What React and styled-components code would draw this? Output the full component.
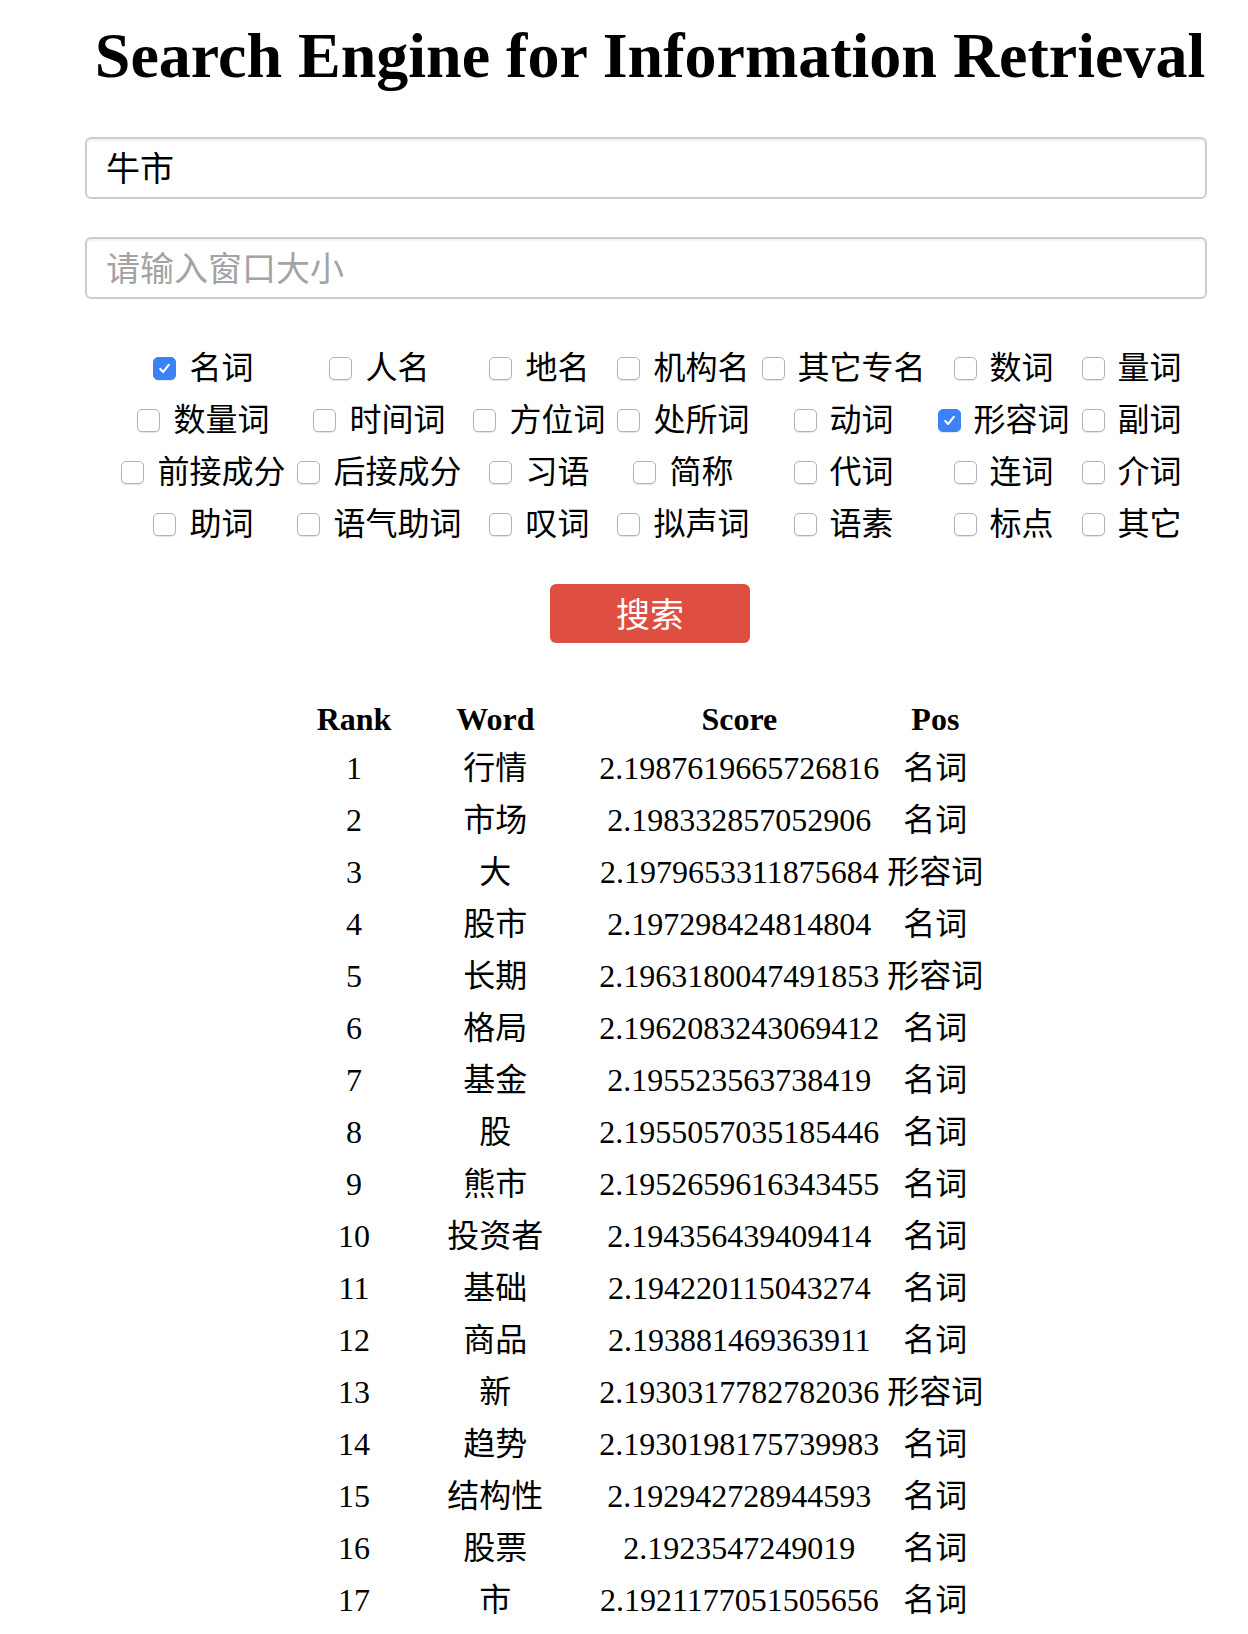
import { useState } from "react";
import styled, { createGlobalStyle } from "styled-components";

const GlobalStyle = createGlobalStyle`
  body {
    margin: 0;
    background: #fff;
    color: #000;
    font-family: "Liberation Serif", "Noto Sans CJK SC", serif;
  }
`;

const POS_ROWS = [
  ["名词", "人名", "地名", "机构名", "其它专名", "数词", "量词"],
  ["数量词", "时间词", "方位词", "处所词", "动词", "形容词", "副词"],
  ["前接成分", "后接成分", "习语", "简称", "代词", "连词", "介词"],
  ["助词", "语气助词", "叹词", "拟声词", "语素", "标点", "其它"],
];

const RESULTS = [
  [1, "行情", "2.1987619665726816", "名词"],
  [2, "市场", "2.198332857052906", "名词"],
  [3, "大", "2.1979653311875684", "形容词"],
  [4, "股市", "2.197298424814804", "名词"],
  [5, "长期", "2.1963180047491853", "形容词"],
  [6, "格局", "2.1962083243069412", "名词"],
  [7, "基金", "2.195523563738419", "名词"],
  [8, "股", "2.1955057035185446", "名词"],
  [9, "熊市", "2.1952659616343455", "名词"],
  [10, "投资者", "2.194356439409414", "名词"],
  [11, "基础", "2.194220115043274", "名词"],
  [12, "商品", "2.193881469363911", "名词"],
  [13, "新", "2.1930317782782036", "形容词"],
  [14, "趋势", "2.1930198175739983", "名词"],
  [15, "结构性", "2.192942728944593", "名词"],
  [16, "股票", "2.1923547249019", "名词"],
  [17, "市", "2.1921177051505656", "名词"],
];

const App = () => {
  const [query, setQuery] = useState("牛市");
  const [win, setWin] = useState("");
  const [picked, setPicked] = useState(["名词", "形容词"]);

  function toggle(name) {
    setPicked((old) =>
      old.includes(name) ? old.filter((p) => p !== name) : [...old, name]
    );
  }

  return (
    <>
      <GlobalStyle />
      <Page>
        <Title>Search Engine for Information Retrieval</Title>
        <Field value={query} onChange={(e) => setQuery(e.target.value)} />
        <Field
          $gap={38}
          placeholder="请输入窗口大小"
          value={win}
          onChange={(e) => setWin(e.target.value)}
        />
        <PosGrid>
          {POS_ROWS.flat().map((name) => {
            const on = picked.includes(name);
            return (
              <PosOption key={name} onClick={() => toggle(name)}>
                <Box $checked={on}>
                  {on && (
                    <svg width="15" height="15" viewBox="0 0 14 14">
                      <path
                        d="M3 7.4 L5.8 10.2 L11 3.6"
                        fill="none"
                        stroke="#fff"
                        strokeWidth="2"
                        strokeLinecap="round"
                        strokeLinejoin="round"
                      />
                    </svg>
                  )}
                </Box>
                {name}
              </PosOption>
            );
          })}
        </PosGrid>
        <SearchButton>搜索</SearchButton>
        <ResultTable>
          <thead>
            <tr>
              <th>Rank</th>
              <WordHead>Word</WordHead>
              <th>Score</th>
              <th>Pos</th>
            </tr>
          </thead>
          <tbody>
            {RESULTS.map(([rank, word, score, pos]) => (
              <tr key={rank}>
                <td>{rank}</td>
                <td>{word}</td>
                <td>{score}</td>
                <td>{pos}</td>
              </tr>
            ))}
          </tbody>
        </ResultTable>
      </Page>
    </>
  );
};

const Page = styled.div`
  width: 1130px;
  margin-left: 85px;
`;

const Title = styled.h1`
  margin: 20px 0 0;
  font-size: 64px;
  line-height: 72px;
  font-weight: bold;
  text-align: center;
  white-space: nowrap;
`;

const Field = styled.input`
  display: block;
  box-sizing: border-box;
  width: 1122px;
  height: 62px;
  margin-top: ${(p) => p.$gap || 45}px;
  padding: 0 19px 3px;
  border: 2px solid #cdcdcd;
  border-radius: 6px;
  box-shadow: inset 0 2px 2px rgba(0, 0, 0, 0.06);
  font-family: "Noto Sans CJK SC", sans-serif;
  font-size: 34px;
  color: #000;
  outline: none;

  &::placeholder {
    color: #a3a3a3;
  }
`;

const PosGrid = styled.div`
  display: grid;
  grid-template-columns: repeat(7, max-content);
  grid-auto-rows: 52px;
  column-gap: 12px;
  justify-content: center;
  margin-top: 43px;
  padding-left: 3px;
`;

const PosOption = styled.label`
  display: flex;
  align-items: center;
  justify-self: center;
  gap: 13px;
  font-size: 32px;
  line-height: 52px;
  cursor: pointer;
  user-select: none;
`;

const Box = styled.span`
  display: flex;
  align-items: center;
  justify-content: center;
  box-sizing: border-box;
  width: 23px;
  height: 23px;
  border-radius: 5px;
  border: 1px solid ${(p) => (p.$checked ? "#3b82f6" : "#b3b3b3")};
  background: ${(p) => (p.$checked ? "#3b82f6" : "#fff")};
  box-shadow: 0 1px 1px rgba(0, 0, 0, 0.1);
`;

const SearchButton = styled.button`
  display: block;
  width: 200px;
  height: 59px;
  margin: 34px auto 0;
  padding: 0 0 3px;
  border: none;
  border-radius: 6px;
  background: #de4f42;
  color: #fff;
  font-family: "Noto Sans CJK SC", sans-serif;
  font-size: 34px;
  cursor: pointer;
`;

const ResultTable = styled.table`
  margin: 52px auto 0;
  border-spacing: 4px;
  font-size: 32px;

  th {
    padding: 2px;
    line-height: 37px;
    font-weight: bold;
  }

  td {
    padding: 2px;
    height: 44px;
    line-height: 44px;
    text-align: center;
    white-space: nowrap;
  }
`;

const WordHead = styled.th`
  width: 192px;
`;

export default App;
